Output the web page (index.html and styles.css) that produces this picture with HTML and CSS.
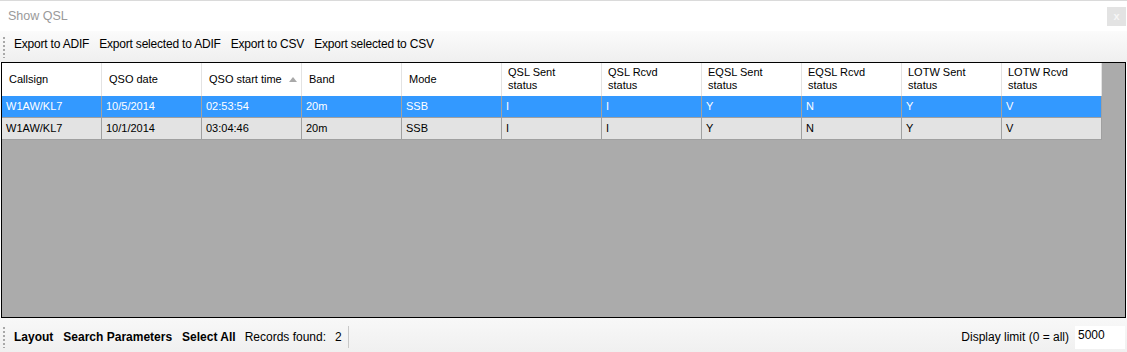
FILE: index.html
```html
<!DOCTYPE html>
<html>
<head>
<meta charset="utf-8">
<title>Show QSL</title>
<link rel="stylesheet" href="styles.css">
</head>
<body>
<div class="window">
  <div class="titlebar">
    <span class="title">Show QSL</span>
    <span class="close">x</span>
  </div>
  <div class="toolbar">
    <span class="grip"></span>
    <span class="tb-item">Export to ADIF</span>
    <span class="tb-item">Export selected to ADIF</span>
    <span class="tb-item">Export to CSV</span>
    <span class="tb-item">Export selected to CSV</span>
  </div>
  <div class="grid">
    <div class="row head">
      <div class="cell">Callsign</div>
      <div class="cell">QSO date</div>
      <div class="cell sorted">QSO start time<span class="arrow"></span></div>
      <div class="cell">Band</div>
      <div class="cell">Mode</div>
      <div class="cell two">QSL Sent<br>status</div>
      <div class="cell two">QSL Rcvd<br>status</div>
      <div class="cell two">EQSL Sent<br>status</div>
      <div class="cell two">EQSL Rcvd<br>status</div>
      <div class="cell two">LOTW Sent<br>status</div>
      <div class="cell two">LOTW Rcvd<br>status</div>
    </div>
    <div class="row data selected">
      <div class="cell">W1AW/KL7</div>
      <div class="cell">10/5/2014</div>
      <div class="cell">02:53:54</div>
      <div class="cell">20m</div>
      <div class="cell">SSB</div>
      <div class="cell">I</div>
      <div class="cell">I</div>
      <div class="cell">Y</div>
      <div class="cell">N</div>
      <div class="cell">Y</div>
      <div class="cell">V</div>
    </div>
    <div class="row data">
      <div class="cell">W1AW/KL7</div>
      <div class="cell">10/1/2014</div>
      <div class="cell">03:04:46</div>
      <div class="cell">20m</div>
      <div class="cell">SSB</div>
      <div class="cell">I</div>
      <div class="cell">I</div>
      <div class="cell">Y</div>
      <div class="cell">N</div>
      <div class="cell">Y</div>
      <div class="cell">V</div>
    </div>
  </div>
  <div class="statusbar">
    <span class="grip"></span>
    <span class="sb-item bold">Layout</span>
    <span class="sb-item bold">Search Parameters</span>
    <span class="sb-item bold">Select All</span>
    <span class="sb-item label">Records found:</span>
    <span class="sb-item count">2</span>
    <span class="sep"></span>
    <span class="spacer"></span>
    <span class="sb-item">Display limit (0 = all)</span>
    <span class="limit">5000</span>
  </div>
</div>
</body>
</html>
```
FILE: styles.css
```css
html, body {
  margin: 0;
  padding: 0;
  background: #ffffff;
}
.window {
  width: 1127px;
  height: 352px;
  overflow: hidden;
  display: flex;
  flex-direction: column;
  font-family: "Liberation Sans", Arial, sans-serif;
}
.titlebar {
  height: 31px;
  flex: none;
  display: flex;
  align-items: center;
  padding-left: 8px;
  box-sizing: border-box;
  border-top: 1px solid #dadada;
}
.title {
  font-size: 12.5px;
  color: #9a9a9a;
}
.close {
  margin-left: auto;
  margin-right: 1px;
  width: 19px;
  height: 19px;
  background: #e3e3e3;
  color: #f6f6f6;
  font-size: 11px;
  font-weight: bold;
  display: flex;
  align-items: center;
  justify-content: center;
  line-height: 1;
}
.toolbar {
  height: 31px;
  flex: none;
  display: flex;
  align-items: center;
  background: linear-gradient(#fbfbfb, #efefef);
  font-size: 12px;
  color: #000;
  box-sizing: border-box;
  padding-left: 3px;
  padding-bottom: 6px;
}
.grip {
  width: 2px;
  height: 22px;
  flex: none;
  background-image: radial-gradient(circle, #a8a8a8 0.8px, transparent 1px);
  background-size: 2px 4px;
  margin-right: 4px;
}
.toolbar .grip {
  margin-top: 6px;
}
.tb-item {
  padding: 0 5px 0 5px;
  white-space: nowrap;
  letter-spacing: -0.2px;
}
.grid {
  height: 256px;
  flex: none;
  margin: 0 1px;
  box-sizing: border-box;
  border: 1px solid #000;
  background: #ababab;
  font-size: 11px;
  display: flex;
  flex-direction: column;
  align-items: flex-start;
}
.row {
  display: flex;
  flex: none;
}
.cell {
  width: 100px;
  flex: none;
  box-sizing: border-box;
  border-right: 1px solid #a0a0a0;
  white-space: nowrap;
  overflow: hidden;
}
.head {
  height: 33px;
  background: #ffffff;
}
.head .cell {
  border-right: 1px solid #e3e3e3;
  display: flex;
  align-items: center;
  padding-left: 7px;
  color: #000;
  line-height: 13px;
}
.head .cell.two {
  padding-left: 6px;
  align-items: flex-start;
  padding-top: 3px;
}
.sorted {
  position: relative;
}
.arrow {
  position: absolute;
  left: 87px;
  top: 14px;
  width: 0;
  height: 0;
  border-left: 4.5px solid transparent;
  border-right: 4.5px solid transparent;
  border-bottom: 5px solid #a9a9a9;
}
.data {
  height: 22px;
  background: #e3e3e3;
  color: #000;
}
.data .cell {
  padding-left: 4px;
  line-height: 21px;
  border-bottom: 1px solid #a0a0a0;
}
.data.selected {
  background: #3399ff;
  color: #ffffff;
}
.statusbar {
  flex: 1;
  display: flex;
  align-items: center;
  background: linear-gradient(#f8f8f8, #f0f0f0);
  font-size: 12px;
  color: #000;
  padding-left: 3px;
  padding-top: 4px;
  box-sizing: border-box;
}
.sb-item {
  padding: 0 5px;
  white-space: nowrap;
}
.sb-item.bold {
  font-weight: bold;
}
.sb-item.label {
  padding-right: 4px;
  padding-left: 4px;
}
.sb-item.count {
  padding-left: 5px;
  padding-right: 5px;
}
.sep {
  width: 1px;
  height: 22px;
  background: #c8c8c8;
  margin-left: 1px;
}
.spacer {
  flex: 1;
}
.limit {
  width: 50px;
  height: 23px;
  margin-left: 1px;
  margin-right: 2px;
  background: #ffffff;
  box-sizing: border-box;
  padding-left: 3px;
  line-height: 19px;
  font-size: 12px;
}
```
